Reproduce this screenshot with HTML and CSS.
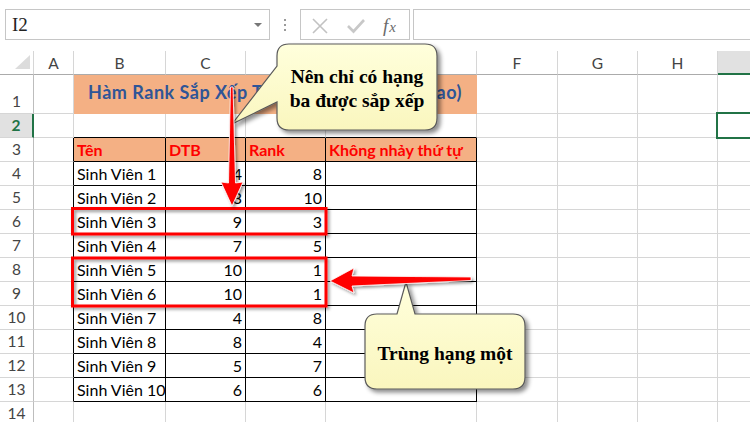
FILE: index.html
```html
<!DOCTYPE html>
<html lang="vi">
<head>
<meta charset="utf-8">
<title>Hàm Rank</title>
<link rel="stylesheet" href="styles.css">
</head>
<body>
<div class="app">
  <div class="fbar">
    <div class="namebox"><span class="nb-text">I2</span><span class="caret"></span></div>
    <div class="grip"><i></i><i></i><i></i></div>
    <div class="fbtns">
      <svg class="ic-x" width="16" height="16" viewBox="0 0 16 16"><path d="M1 1 L15 15 M15 1 L1 15" stroke="#c2c2c2" stroke-width="1.6" fill="none"/></svg>
      <svg class="ic-ok" width="18" height="16" viewBox="0 0 18 16"><path d="M1 8 L6.5 13.5 L17 2" stroke="#c8c8c8" stroke-width="2.6" fill="none"/></svg>
      <span class="fx">f<span class="fx-x">x</span></span>
    </div>
    <div class="finput"></div>
  </div>

  <div class="sheet">
    <!-- column headers -->
    <div class="c corner"><svg width="33" height="23" viewBox="0 0 33 23"><polygon points="30,4 30,18 15,18" fill="#dcdcdc"/></svg></div>
    <div class="c ch">A</div><div class="c ch">B</div><div class="c ch">C</div><div class="c ch">D</div><div class="c ch">E</div><div class="c ch">F</div><div class="c ch">G</div><div class="c ch">H</div><div class="c ch chsel"></div>

    <!-- row 1 -->
    <div class="c rh">1</div><div class="c"></div><div class="c title">Hàm Rank Sắp Xếp Thứ Tự (Từ thấp đến cao)</div><div class="c"></div><div class="c"></div><div class="c"></div><div class="c last"></div>

    <!-- row 2 -->
    <div class="c rh rhsel">2</div><div class="c"></div><div class="c tt"></div><div class="c tt"></div><div class="c tt"></div><div class="c tt"></div><div class="c"></div><div class="c"></div><div class="c"></div><div class="c last cur"></div>

    <!-- row 3 -->
    <div class="c rh">3</div><div class="c tl"></div><div class="c tb hd">Tên</div><div class="c tb hd">DTB</div><div class="c tb hd">Rank</div><div class="c tb hd">Không nhảy thứ tự</div><div class="c"></div><div class="c"></div><div class="c"></div><div class="c last"></div>

    <div class="c rh">4</div><div class="c tl"></div><div class="c tb">Sinh Viên 1</div><div class="c tb num">4</div><div class="c tb num">8</div><div class="c tb"></div><div class="c"></div><div class="c"></div><div class="c"></div><div class="c last"></div>
    <div class="c rh">5</div><div class="c tl"></div><div class="c tb">Sinh Viên 2</div><div class="c tb num">3</div><div class="c tb num">10</div><div class="c tb"></div><div class="c"></div><div class="c"></div><div class="c"></div><div class="c last"></div>
    <div class="c rh">6</div><div class="c tl"></div><div class="c tb">Sinh Viên 3</div><div class="c tb num">9</div><div class="c tb num">3</div><div class="c tb"></div><div class="c"></div><div class="c"></div><div class="c"></div><div class="c last"></div>
    <div class="c rh">7</div><div class="c tl"></div><div class="c tb">Sinh Viên 4</div><div class="c tb num">7</div><div class="c tb num">5</div><div class="c tb"></div><div class="c"></div><div class="c"></div><div class="c"></div><div class="c last"></div>
    <div class="c rh">8</div><div class="c tl"></div><div class="c tb">Sinh Viên 5</div><div class="c tb num">10</div><div class="c tb num">1</div><div class="c tb"></div><div class="c"></div><div class="c"></div><div class="c"></div><div class="c last"></div>
    <div class="c rh">9</div><div class="c tl"></div><div class="c tb">Sinh Viên 6</div><div class="c tb num">10</div><div class="c tb num">1</div><div class="c tb"></div><div class="c"></div><div class="c"></div><div class="c"></div><div class="c last"></div>
    <div class="c rh">10</div><div class="c tl"></div><div class="c tb">Sinh Viên 7</div><div class="c tb num">4</div><div class="c tb num">8</div><div class="c tb"></div><div class="c"></div><div class="c"></div><div class="c"></div><div class="c last"></div>
    <div class="c rh">11</div><div class="c tl"></div><div class="c tb">Sinh Viên 8</div><div class="c tb num">8</div><div class="c tb num">4</div><div class="c tb"></div><div class="c"></div><div class="c"></div><div class="c"></div><div class="c last"></div>
    <div class="c rh">12</div><div class="c tl"></div><div class="c tb">Sinh Viên 9</div><div class="c tb num">5</div><div class="c tb num">7</div><div class="c tb"></div><div class="c"></div><div class="c"></div><div class="c"></div><div class="c last"></div>
    <div class="c rh">13</div><div class="c tl"></div><div class="c tb">Sinh Viên 10</div><div class="c tb num">6</div><div class="c tb num">6</div><div class="c tb"></div><div class="c"></div><div class="c"></div><div class="c"></div><div class="c last"></div>

    <div class="c rh">14</div><div class="c"></div><div class="c"></div><div class="c"></div><div class="c"></div><div class="c"></div><div class="c"></div><div class="c"></div><div class="c"></div><div class="c last"></div>
  </div>

  <svg class="overlay" width="750" height="422" viewBox="0 0 750 422">
    <defs>
      <filter id="sh" x="-20%" y="-20%" width="150%" height="150%">
        <feDropShadow dx="2" dy="2" stdDeviation="1.5" flood-color="#000" flood-opacity="0.4"/>
      </filter>
      <filter id="sh2" x="-20%" y="-20%" width="150%" height="150%">
        <feDropShadow dx="3" dy="3" stdDeviation="2" flood-color="#000" flood-opacity="0.45"/>
      </filter>
      <linearGradient id="yl" x1="0" y1="0" x2="0" y2="1">
        <stop offset="0" stop-color="#FFFFDC"/>
        <stop offset="1" stop-color="#FAF6BE"/>
      </linearGradient>
    </defs>
    <rect x="72.5" y="208.5" width="253.5" height="25.5" fill="none" stroke="#f00" stroke-width="3" filter="url(#sh)"/>
    <rect x="72.5" y="258" width="253.5" height="48" fill="none" stroke="#f00" stroke-width="3" filter="url(#sh)"/>

    <path d="M289,44 H425 Q437,44 437,56 V118 Q437,130 425,130 H289 Q277,130 277,118 V102 L232,124 L277,66 V56 Q277,44 289,44 Z" fill="url(#yl)" stroke="#5a5a5a" stroke-width="1.2" filter="url(#sh2)"/>
    <path d="M377,314 H397 L406,282 L415,314 H513 Q525,314 525,326 V377 Q525,389 513,389 H377 Q365,389 365,377 V326 Q365,314 377,314 Z" fill="url(#yl)" stroke="#5a5a5a" stroke-width="1.2" filter="url(#sh2)"/>

    <path d="M230.5,87 L233,87 L235.5,183 L243,182 L232,206 L221,182 L228.5,183 Z" fill="#f00" stroke="#fff" stroke-width="0.8" filter="url(#sh)"/>
    <path d="M330,281 L354,268 L352,276 L471,277 L471,280.5 L352,286 L354,293 Z" fill="#f00" stroke="#fff" stroke-width="0.8" filter="url(#sh)"/>
  </svg>

  <div class="note note1">Nên chỉ có hạng<br>ba được sắp xếp</div>
  <div class="note note2">Trùng hạng một</div>
</div>
</body>
</html>
```

FILE: styles.css
```css
* { box-sizing: border-box; }
html, body { margin: 0; padding: 0; }
body {
  width: 750px;
  height: 422px;
  overflow: hidden;
  background: #fff;
  font-family: "Lato", "Liberation Sans", sans-serif;
}
.app {
  position: relative;
  width: 750px;
  height: 422px;
  overflow: hidden;
}

/* formula bar */
.fbar {
  display: flex;
  align-items: flex-start;
  height: 51px;
  padding-top: 9px;
  padding-left: 5px;
}
.namebox {
  width: 265px;
  height: 31px;
  border: 1px solid #c6c6c6;
  display: flex;
  align-items: center;
  justify-content: space-between;
  padding: 0 7px 0 6px;
}
.nb-text {
  font-family: "Liberation Serif", serif;
  font-size: 19px;
  color: #222;
}
.caret {
  width: 0;
  height: 0;
  border-left: 4px solid transparent;
  border-right: 4px solid transparent;
  border-top: 4px solid #777;
}
.grip {
  width: 30px;
  height: 31px;
  display: flex;
  flex-direction: column;
  align-items: center;
  justify-content: center;
  gap: 3px;
}
.grip i {
  display: block;
  width: 2px;
  height: 2px;
  background: #9a9a9a;
}
.fbtns {
  width: 110px;
  height: 31px;
  border: 1px solid #c6c6c6;
  display: flex;
  align-items: center;
  padding: 2px 0 0 11px;
}
.ic-x { margin-right: 19px; }
.ic-ok { margin-right: 18px; }
.fx {
  font-family: "Liberation Serif", serif;
  font-style: italic;
  font-size: 19px;
  color: #6a6a6a;
  line-height: 1;
}
.fx-x { font-size: 15px; margin-left: 1px; }
.finput {
  flex: 1;
  height: 31px;
  margin-left: 3px;
  margin-right: -4px;
  border: 1px solid #c6c6c6;
}

/* sheet grid */
.sheet {
  display: grid;
  grid-template-columns: 34px 40px 92px 80px 80px 151px 81px 80px 80px 1fr;
  grid-template-rows: 24px 39px repeat(13, 24px);
  height: 371px;
  font-size: 16px;
  color: #000;
}
.c {
  border-right: 1px solid #d6d6d6;
  border-bottom: 1px solid #d6d6d6;
  display: flex;
  align-items: flex-end;
  padding: 0 3px 1px 3px;
  line-height: 20px;
  white-space: nowrap;
}
.c.last { border-right: none; }

.corner {
  padding: 0;
  border-bottom: 1px solid #ababab;
  align-items: flex-start;
}
.ch {
  border-bottom: 1px solid #ababab;
  justify-content: center;
  align-items: center;
  padding: 0;
  font-size: 15.5px;
  color: #444;
}
.chsel {
  background: #e1e1e1;
  border-bottom: 2px solid #217346;
  border-right: none;
}
.rh {
  justify-content: center;
  padding: 0 0 2px 0;
  border-right: 1px solid #bdbdbd;
  font-size: 15.5px;
  color: #444;
}
.rhsel {
  background: #e1e1e1;
  border-right: 2px solid #217346;
  color: #217346;
  font-weight: bold;
}

.title {
  grid-column: span 4;
  background: #f4b084;
  border-right-color: #f4b084;
  border-bottom-color: #f4b084;
  justify-content: center;
  align-items: center;
  padding: 0 0 5px 0;
  font-size: 18px;
  letter-spacing: 0.5px;
  font-weight: bold;
  color: #2f5597;
}
.tt { border-bottom-color: #000; }
.tl { border-right-color: #000; }
.tb {
  border-right-color: #000;
  border-bottom-color: #000;
}
.hd {
  background: #f4b084;
  color: #ff0000;
  font-weight: bold;
}
.num { justify-content: flex-end; }

.cur { position: relative; }
.cur::after {
  content: "";
  position: absolute;
  left: -2px;
  top: -2px;
  right: -10px;
  bottom: -2px;
  border: 2px solid #217346;
  z-index: 2;
}

/* overlays: callouts, arrows, highlight boxes */
.overlay {
  position: absolute;
  left: 0;
  top: 0;
  pointer-events: none;
  z-index: 3;
}
.note {
  position: absolute;
  z-index: 4;
  display: flex;
  align-items: center;
  justify-content: center;
  text-align: center;
  padding-top: 4px;
  font-family: "Liberation Serif", serif;
  font-weight: bold;
  font-size: 19.5px;
  line-height: 24px;
  color: #000;
}
.note1 { left: 277px; top: 44px; width: 160px; height: 86px; }
.note2 { left: 365px; top: 314px; width: 160px; height: 75px; }
```
